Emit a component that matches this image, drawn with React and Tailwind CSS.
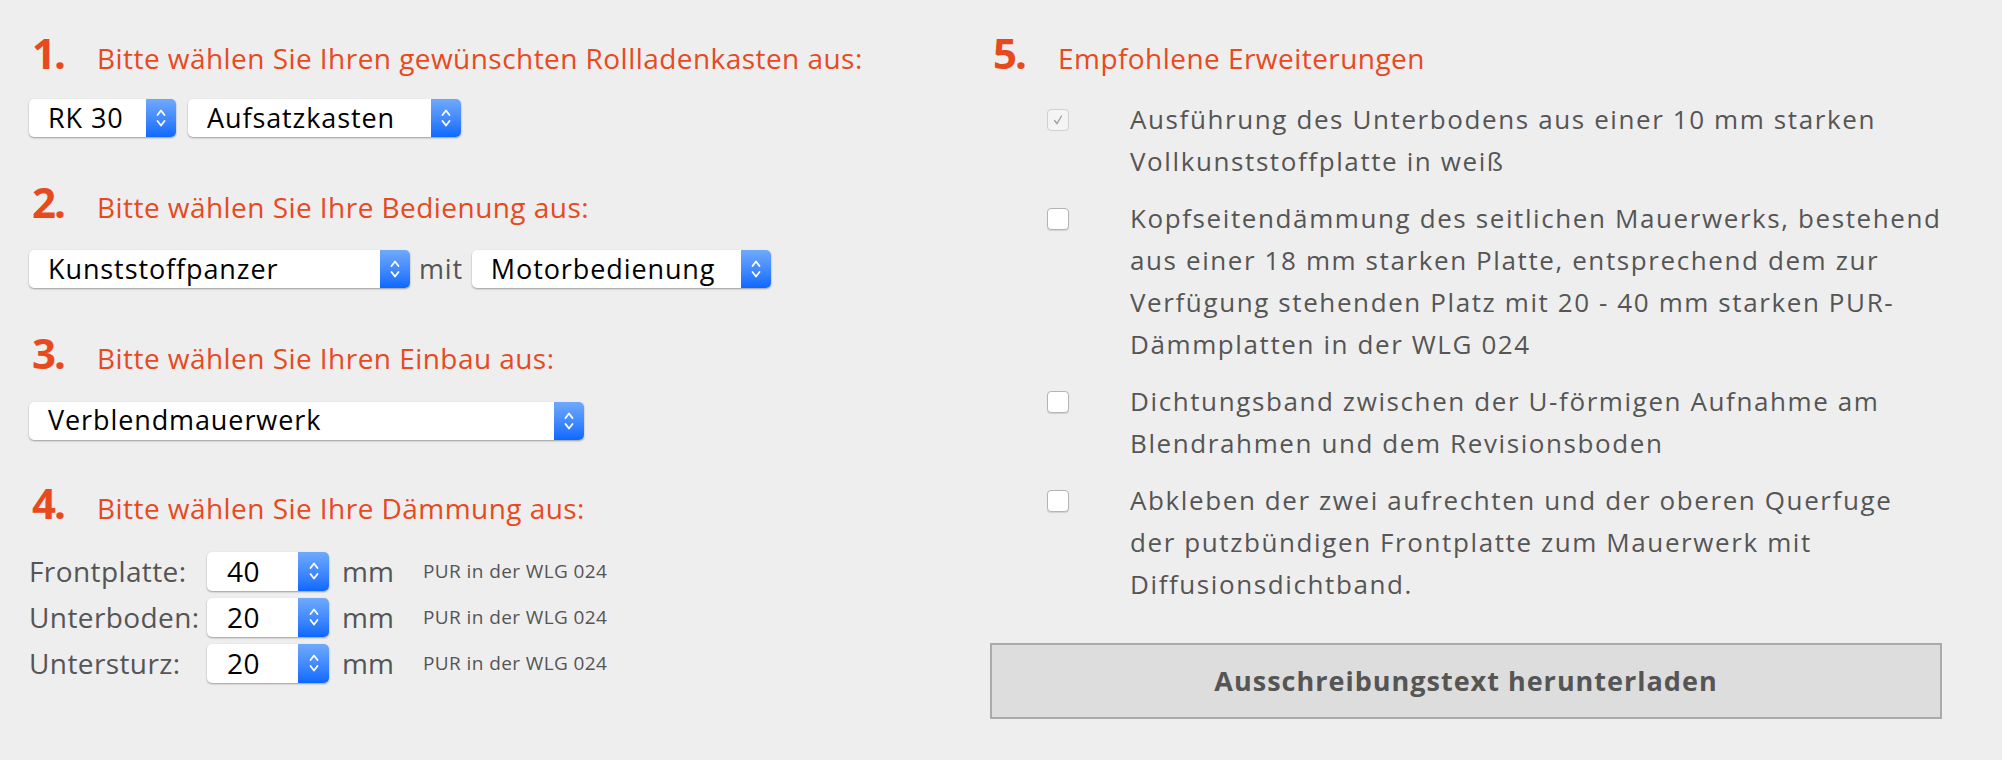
import React from "react";

const ORANGE = "text-[#e8491d]";

function Stepper({ wide }) {
  return (
    <span
      className={`flex items-center justify-center self-stretch ${wide ? "w-[31px]" : "w-[30px]"} rounded-r-[5px] bg-gradient-to-b from-[#6fa9fb] to-[#0b68fe]`}
    >
      <svg width="12" height="22" viewBox="0 0 12 22" fill="none" stroke="white" strokeWidth="1.8" strokeLinecap="round" strokeLinejoin="round">
        <path d="M2.5 8 L6 3.5 L9.5 8" />
        <path d="M2.5 14 L6 18.5 L9.5 14" />
      </svg>
    </span>
  );
}

function Select({ value, width }) {
  return (
    <div
      className={`flex h-[38px] items-stretch rounded-[5px] bg-white shadow-[0_1px_2px_rgba(0,0,0,0.35)] ${width}`}
    >
      <span className="flex flex-1 items-center pl-[19px] text-[27px] tracking-[0.9px] text-black">{value}</span>
      <Stepper />
    </div>
  );
}

function NumberInput({ value }) {
  return (
    <div className="flex h-[39px] w-[122px] items-stretch rounded-[5px] bg-white shadow-[0_1px_2px_rgba(0,0,0,0.35)]">
      <span className="flex flex-1 items-center pl-[20px] text-[28px] tracking-[0.5px] text-black">{value}</span>
      <Stepper wide />
    </div>
  );
}

function Heading({ num, children }) {
  return (
    <div className="flex h-[40px] items-baseline pl-[3px] leading-[36px]">
      <span className={`w-[65px] text-[42px] font-bold tracking-[-2px] ${ORANGE}`}>{num}</span>
      <span className={`text-[28px] tracking-[0.45px] ${ORANGE}`}>{children}</span>
    </div>
  );
}

function Checkbox({ checked }) {
  return checked ? (
    <span className="mt-[11px] flex h-[22px] w-[22px] shrink-0 items-center justify-center rounded-[4px] border border-[#d0d0d0] bg-[#f4f4f4]">
      <svg width="12" height="12" viewBox="0 0 12 12" fill="none" stroke="#a0a0a0" strokeWidth="1.4" strokeLinecap="round">
        <path d="M2.5 6.5 L5 9.5 L9.5 2" />
      </svg>
    </span>
  ) : (
    <span className="mt-[11px] h-[22px] w-[22px] shrink-0 rounded-[4px] border border-[#b4b4b4] bg-white shadow-[0_1px_1px_rgba(0,0,0,0.12)]" />
  );
}

const OPTIONS = [
  { checked: true, lines: ["Ausführung des Unterbodens aus einer 10 mm starken", "Vollkunststoffplatte in weiß"] },
  {
    lines: [
      "Kopfseitendämmung des seitlichen Mauerwerks, bestehend",
      "aus einer 18 mm starken Platte, entsprechend dem zur",
      "Verfügung stehenden Platz mit 20 - 40 mm starken PUR-",
      "Dämmplatten in der WLG 024",
    ],
  },
  { lines: ["Dichtungsband zwischen der U-förmigen Aufnahme am", "Blendrahmen und dem Revisionsboden"] },
  {
    lines: [
      "Abkleben der zwei aufrechten und der oberen Querfuge",
      "der putzbündigen Frontplatte zum Mauerwerk mit",
      "Diffusionsdichtband.",
    ],
  },
];

const INSULATION = [
  { label: "Frontplatte:", value: "40" },
  { label: "Unterboden:", value: "20" },
  { label: "Untersturz:", value: "20" },
];

export default function App() {
  return (
    <div className="flex min-h-screen bg-[#eeeeee] pl-[29px] pt-[35px] font-['Open_Sans',sans-serif]">
      {/* left column */}
      <div className="w-[961px] shrink-0">
        <Heading num="1.">Bitte wählen Sie Ihren gewünschten Rollladenkasten aus:</Heading>
        <div className="mt-[24px] flex gap-[12px]">
          <Select value="RK 30" width="w-[147px]" />
          <Select value="Aufsatzkasten" width="w-[273px]" />
        </div>

        <div className="mt-[47px]">
          <Heading num="2.">Bitte wählen Sie Ihre Bedienung aus:</Heading>
        </div>
        <div className="mt-[25px] flex items-center">
          <Select value="Kunststoffpanzer" width="w-[381px]" />
          <span className="mx-[9px] text-[27px] tracking-[0.8px] text-[#555]">mit</span>
          <Select value="Motorbedienung" width="w-[299px]" />
        </div>

        <div className="mt-[45px]">
          <Heading num="3.">Bitte wählen Sie Ihren Einbau aus:</Heading>
        </div>
        <div className="mt-[27px] flex">
          <Select value="Verblendmauerwerk" width="w-[555px]" />
        </div>

        <div className="mt-[45px]">
          <Heading num="4.">Bitte wählen Sie Ihre Dämmung aus:</Heading>
        </div>
        <div className="mt-[27px] flex flex-col gap-[7px]">
          {INSULATION.map((row) => (
            <div key={row.label} className="flex h-[39px] items-center leading-none">
              <span className="w-[178px] text-[28px] tracking-[0.4px] text-[#555]">{row.label}</span>
              <NumberInput value={row.value} />
              <span className="ml-[13px] w-[81px] text-[28px] text-[#555]">mm</span>
              <span className="text-[19px] tracking-[0.4px] text-[#555]">PUR in der WLG 024</span>
            </div>
          ))}
        </div>
      </div>

      {/* right column */}
      <div className="w-[952px] shrink-0">
        <Heading num="5.">Empfohlene Erweiterungen</Heading>
        <div className="mt-[23px] flex flex-col gap-[15px] pl-[57px]">
          {OPTIONS.map((opt, i) => (
            <div key={i} className="flex">
              <Checkbox checked={opt.checked} />
              <p className="ml-[61px] text-[26px] leading-[42px] tracking-[1.6px] text-[#555]">
                {opt.lines.map((l, j) => (
                  <span key={j} className="block whitespace-nowrap">{l}</span>
                ))}
              </p>
            </div>
          ))}
        </div>
        <button className="mt-[38px] flex h-[76px] w-full items-center justify-center border-2 border-[#aaaaaa] bg-[#dddddd] text-[27px] font-bold tracking-[1px] text-[#555]">
          Ausschreibungstext herunterladen
        </button>
      </div>
    </div>
  );
}
